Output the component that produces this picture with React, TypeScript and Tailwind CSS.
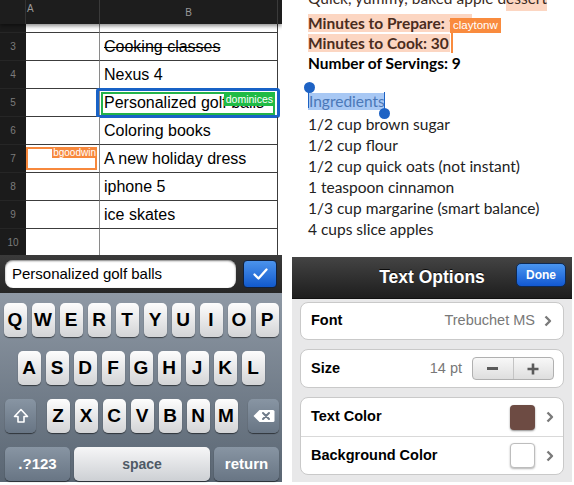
import React from 'react';

const sheetRows = [
  { n: 2, text: 'Global knife set', strike: true },
  { n: 3, text: 'Cooking classes', strike: true },
  { n: 4, text: 'Nexus 4' },
  { n: 5, text: 'Personalized golf balls', editing: true },
  { n: 6, text: 'Coloring books' },
  { n: 7, text: 'A new holiday dress', orange: true },
  { n: 8, text: 'iphone 5' },
  { n: 9, text: 'ice skates' },
  { n: 10, text: '' },
];

const ingredients = [
  '1/2 cup brown sugar',
  '1/2 cup flour',
  '1/2 cup quick oats (not instant)',
  '1 teaspoon cinnamon',
  '1/3 cup margarine (smart balance)',
  '4 cups slice apples',
];

const Key: React.FC<{ label: string }> = ({ label }) => (
  <div className="w-[23px] h-[34px] rounded-[5px] bg-gradient-to-b from-[#fdfdfd] to-[#d3d4d6] shadow-[0_1px_1px_rgba(0,0,0,0.55)] flex items-center justify-center text-[19px] font-bold text-black">
    {label}
  </div>
);

const specialKey =
  'h-[34px] rounded-[5px] bg-gradient-to-b from-[#8895a3] to-[#687584] shadow-[0_1px_1px_rgba(0,0,0,0.55)] flex items-center justify-center';

const Chevron = () => (
  <svg width="8" height="12" viewBox="0 0 8 12">
    <polyline points="1.5,1.5 6,6 1.5,10.5" fill="none" stroke="#7a7a7a" strokeWidth="2.4" strokeLinejoin="round" />
  </svg>
);

const Spreadsheet = () => (
  <div className="h-[255px] flex flex-col bg-white overflow-hidden">
    {/* column headers */}
    <div className="relative z-10 h-[24px] shrink-0 grid grid-cols-[26px_74px_178px_4px] bg-[#1d1d1d] shadow-[0_2px_4px_rgba(0,0,0,0.45)] text-[10px] text-[#9a9a9a]">
      <div className="border-r border-[#333]" />
      <div className="border-r border-[#3a3a3a] pl-[1px] pt-[4px] leading-none">A</div>
      <div className="border-r border-[#3a3a3a] flex items-center justify-center">B</div>
      <div />
    </div>
    <div className="flex-1 overflow-hidden">
      <div className="-mt-[19px]">
        {sheetRows.map((r) => (
          <div key={r.n} className="h-[28px] grid grid-cols-[26px_74px_178px_4px]">
            <div className="bg-[#1b1b1b] border-b border-[#262626] flex items-center justify-center text-[10px] text-[#7c7c7c]">
              {r.n}
            </div>
            <div className="relative border-r border-b border-[#8a8a8a] border-b-[#3c3c3c] bg-white">
              {r.orange && (
                <div className="absolute left-0 top-[2px] w-[71px] h-[23px] border-2 border-[#f7883c]">
                  <div className="absolute right-[-2px] top-[-2px] h-[11px] px-[1px] bg-[#f7883c] text-white text-[10px] leading-[11px]">
                    bgoodwin
                  </div>
                </div>
              )}
            </div>
            <div className="relative border-r border-b border-[#3c3c3c] flex items-center pl-[4px] text-[16px] text-black">
              <span className={r.strike ? 'line-through' : ''}>{r.text}</span>
              {r.editing && (
                <>
                  <div className="absolute left-[-4px] right-[-3px] top-[-1px] bottom-[-2px] border-[3px] border-[#1862c6] rounded-[3px]" />
                  <div className="absolute left-[1px] right-[2px] top-[3px] bottom-[1px] border-2 border-[#22b24a]">
                    <div className="absolute right-[-2px] top-[-2px] h-[14px] px-[2px] bg-[#1fbb45] text-white text-[10.5px] leading-[14px]">
                      dominices
                    </div>
                  </div>
                </>
              )}
            </div>
            <div className="bg-white" />
          </div>
        ))}
      </div>
    </div>
  </div>
);

const Keyboard = () => (
  <div className="flex-1 bg-gradient-to-b from-[#8f99a5] to-[#5a6673] pt-[10px] flex flex-col gap-[14px]">
    <div className="flex justify-center gap-[5px]">
      {'QWERTYUIOP'.split('').map((k) => (
        <Key key={k} label={k} />
      ))}
    </div>
    <div className="flex justify-center gap-[5px]">
      {'ASDFGHJKL'.split('').map((k) => (
        <Key key={k} label={k} />
      ))}
    </div>
    <div className="flex items-center justify-between pl-[5px] pr-[3px]">
      <div className={`${specialKey} w-[31px]`}>
        <svg width="16" height="16" viewBox="0 0 16 16">
          <path d="M8 1.5 L14.5 8.5 H11 V14 H5 V8.5 H1.5 Z" fill="none" stroke="#fff" strokeWidth="1.6" strokeLinejoin="round" />
        </svg>
      </div>
      <div className="flex gap-[5px]">
        {'ZXCVBNM'.split('').map((k) => (
          <Key key={k} label={k} />
        ))}
      </div>
      <div className={`${specialKey} w-[31px]`}>
        <svg width="22" height="14" viewBox="0 0 22 14">
          <path d="M0.5 7 L6.5 1 H20 Q21.5 1 21.5 2.5 V11.5 Q21.5 13 20 13 H6.5 Z" fill="#fff" />
          <path d="M10 4 L16 10 M16 4 L10 10" stroke="#6f7b89" strokeWidth="2" strokeLinecap="round" />
        </svg>
      </div>
    </div>
    <div className="flex items-center gap-[4px] pl-[5px] pr-[3px]">
      <div className={`${specialKey} w-[65px] text-white text-[15px] font-bold`}>.?123</div>
      <div className="flex-1 h-[34px] rounded-[5px] bg-gradient-to-b from-[#f6f6f7] to-[#cdd0d4] shadow-[0_1px_1px_rgba(0,0,0,0.55)] flex items-center justify-center text-[14px] font-bold text-[#4f5a66]">
        space
      </div>
      <div className={`${specialKey} w-[65px] text-white text-[15px] font-bold`}>return</div>
    </div>
  </div>
);

const LeftPhone = () => (
  <div className="w-[282px] h-[482px] flex flex-col font-['Liberation_Sans',Arial,sans-serif]">
    <Spreadsheet />
    <div className="h-[38px] shrink-0 bg-gradient-to-b from-[#3a3a3a] to-[#262626] flex items-center pl-[5px] pr-[5px] gap-[7px]">
      <div className="w-[231px] h-[28px] rounded-[8px] bg-white shadow-[inset_0_1px_2px_rgba(0,0,0,0.5)] flex items-center pl-[7px] text-[15px] text-black">
        Personalized golf balls
      </div>
      <div className="w-[34px] h-[28px] rounded-[4px] border border-[#10213d] bg-gradient-to-b from-[#4b93ec] to-[#1059cc] flex items-center justify-center">
        <svg width="15" height="12" viewBox="0 0 15 12">
          <path d="M1.5 6.5 L5.5 10.5 L13.5 1.5" fill="none" stroke="#fff" strokeWidth="2.3" strokeLinecap="round" strokeLinejoin="round" />
        </svg>
      </div>
    </div>
    <Keyboard />
  </div>
);

const Document = () => (
  <div className="h-[257px] shrink-0 bg-white overflow-hidden pl-[16px] font-['Lato','Open_Sans',sans-serif] text-[15.5px]">
    <div className="-mt-[7px] flex flex-col">
      <div className="h-[20px] leading-[20px] text-[#3a2a22] relative -top-[5px]">
        Quick, yummy, baked apple d<span className="bg-[#fcd6c2] pb-[4px]">essert</span>
      </div>
      <div className="h-[20px] leading-[20px] font-bold text-[#4a2c20] relative">
        <span className="bg-[#fcd6c2] pr-[6px]">Minutes to Prepare: 15</span>
        <span className="absolute left-[142px] top-[5px] h-[15px] px-[3px] bg-[#f98b3e] text-white text-[11.5px] leading-[15px] font-normal font-['Liberation_Sans',Arial,sans-serif]">
          claytonw
        </span>
      </div>
      <div className="h-[20px] leading-[20px] font-bold text-[#4a2c20] relative">
        <span className="bg-[#fcd6c2] pr-[1px]">Minutes to Cook: 30</span>
        <span className="absolute left-[143px] top-0 w-[2px] h-[20px] bg-[#f98b3e]" />
      </div>
      <div className="h-[20px] leading-[20px] font-bold text-black">Number of Servings: 9</div>
      <div className="mt-[17px] h-[20px] leading-[20px] relative">
        <span className="relative top-[1px] inline-block w-[76px] h-[17px] leading-[17px] bg-[#a8c8f4] text-[#4b78b8] pl-[1px]">
          Ingredients
        </span>
        <span className="absolute left-[-4px] top-[-8px] w-[11px] h-[11px] rounded-full bg-[#1d62c4]" />
        <span className="absolute left-[0px] top-[-3px] w-[1px] h-[21px] bg-[#1d62c4]" />
        <span className="absolute left-[76px] top-[2px] w-[1px] h-[18px] bg-[#1d62c4]" />
        <span className="absolute left-[71px] top-[18px] w-[11px] h-[11px] rounded-full bg-[#1d62c4]" />
      </div>
      <div className="mt-[4px] flex flex-col text-[#222]">
        {ingredients.map((t) => (
          <div key={t} className="h-[21px] leading-[21px]">
            {t}
          </div>
        ))}
      </div>
    </div>
  </div>
);

const TextOptions = () => (
  <div className="flex-1 flex flex-col font-['Liberation_Sans',Arial,sans-serif]">
    <div className="h-[42px] shrink-0 bg-gradient-to-b from-[#444] to-[#1e1e1e] border-b border-[#111] relative flex items-center justify-center">
      <span className="text-white text-[17.5px] font-bold [text-shadow:0_-1px_0_rgba(0,0,0,0.8)]">Text Options</span>
      <div className="absolute right-[6px] top-[6px] w-[50px] h-[24px] rounded-[5px] border border-[#0d2a55] bg-gradient-to-b from-[#4a95f0] to-[#1258d2] flex items-center justify-center text-white text-[12px] font-bold">
        Done
      </div>
    </div>
    <div className="flex-1 bg-[#e8e8e9] px-[8px] pt-[3px] flex flex-col gap-[9px]">
      <div className="h-[38px] rounded-[8px] bg-white border border-[#c9c9c9] flex items-center pl-[10px] pr-[11px]">
        <span className="text-[14.5px] font-bold text-black">Font</span>
        <span className="ml-auto mr-[9px] text-[14.5px] text-[#787878]">Trebuchet MS</span>
        <Chevron />
      </div>
      <div className="h-[39px] rounded-[8px] bg-white border border-[#c9c9c9] flex items-center pl-[10px] pr-[9px]">
        <span className="text-[14.5px] font-bold text-black">Size</span>
        <span className="ml-auto mr-[10px] text-[14.5px] text-[#787878]">14 pt</span>
        <div className="w-[82px] h-[23px] rounded-[4px] border border-[#b0b0b0] bg-gradient-to-b from-[#f8f8f8] to-[#dedede] flex">
          <div className="flex-1 flex items-center justify-center border-r border-[#c4c4c4]">
            <span className="w-[11px] h-[3px] bg-[#5a5a5a]" />
          </div>
          <div className="flex-1 flex items-center justify-center">
            <svg width="12" height="12" viewBox="0 0 12 12">
              <path d="M6 0.5 V11.5 M0.5 6 H11.5" stroke="#5a5a5a" strokeWidth="2.6" />
            </svg>
          </div>
        </div>
      </div>
      <div className="h-[78px] rounded-[8px] bg-white border border-[#c9c9c9] flex flex-col">
        <div className="h-[39px] flex items-center pl-[10px] pr-[9px] border-b border-[#d9d9d9]">
          <span className="text-[14.5px] font-bold text-black">Text Color</span>
          <span className="ml-auto mr-[11px] w-[25px] h-[25px] rounded-[4px] bg-[#6d4b43] shadow-[0_1px_2px_rgba(0,0,0,0.45)]" />
          <Chevron />
        </div>
        <div className="flex-1 flex items-center pl-[10px] pr-[9px]">
          <span className="text-[14.5px] font-bold text-black">Background Color</span>
          <span className="ml-auto mr-[11px] w-[25px] h-[25px] rounded-[4px] bg-white border border-[#bdbdbd] shadow-[0_1px_2px_rgba(0,0,0,0.3)]" />
          <Chevron />
        </div>
      </div>
    </div>
  </div>
);

const RightPhone = () => (
  <div className="w-[280px] h-[482px] flex flex-col">
    <Document />
    <TextOptions />
  </div>
);

const App: React.FC = () => {
  return (
    <div className="w-[574px] h-[485px] bg-white flex gap-[10px] overflow-hidden">
      <LeftPhone />
      <RightPhone />
    </div>
  );
};

export default App;
